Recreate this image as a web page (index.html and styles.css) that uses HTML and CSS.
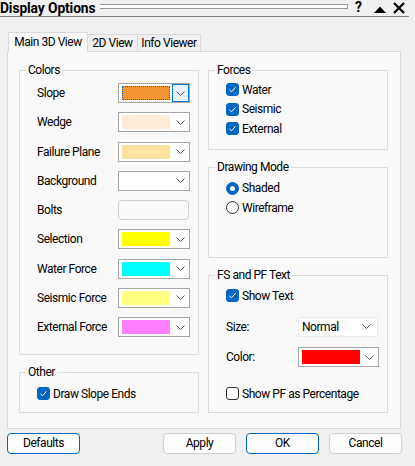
FILE: index.html
```html
<!DOCTYPE html>
<html>
<head>
<meta charset="utf-8">
<link rel="stylesheet" href="styles.css">
</head>
<body>
<div class="titlebar">
  <span class="title">Display Options</span>
  <span class="grip"></span>
  <span class="help">?</span>
  <svg class="tri" width="12" height="7" viewBox="0 0 12 7"><polygon points="0,7 6,0.5 12,7" fill="#000"/></svg>
  <svg class="close" width="12" height="12" viewBox="0 0 12 12"><path d="M1 1 L11 11 M11 1 L1 11" stroke="#000" stroke-width="2.2"/></svg>
</div>
<div class="tabs">
  <div class="tab active">Main 3D View</div>
  <div class="tab">2D View</div>
  <div class="tab">Info Viewer</div>
</div>
<div class="panel">
  <div class="col">
    <div class="group colors">
      <span class="gtitle">Colors</span>
      <div class="crow"><span class="lbl">Slope</span><div class="combo focus"><span class="sw" style="background:#f39530"></span><span class="dd"><svg width="9" height="5" viewBox="0 0 9 5"><polyline points="0.5,0.5 4.5,4.5 8.5,0.5" fill="none" stroke="#555" stroke-width="1"/></svg></span></div></div>
      <div class="crow"><span class="lbl">Wedge</span><div class="combo"><span class="sw" style="background:#feebd7"></span><span class="dd"><svg width="9" height="5" viewBox="0 0 9 5"><polyline points="0.5,0.5 4.5,4.5 8.5,0.5" fill="none" stroke="#555" stroke-width="1"/></svg></span></div></div>
      <div class="crow"><span class="lbl">Failure Plane</span><div class="combo"><span class="sw" style="background:#fee2a2"></span><span class="dd"><svg width="9" height="5" viewBox="0 0 9 5"><polyline points="0.5,0.5 4.5,4.5 8.5,0.5" fill="none" stroke="#555" stroke-width="1"/></svg></span></div></div>
      <div class="crow"><span class="lbl">Background</span><div class="combo"><span class="sw" style="background:#ffffff"></span><span class="dd"><svg width="9" height="5" viewBox="0 0 9 5"><polyline points="0.5,0.5 4.5,4.5 8.5,0.5" fill="none" stroke="#555" stroke-width="1"/></svg></span></div></div>
      <div class="crow"><span class="lbl">Bolts</span><div class="boltbtn"></div></div>
      <div class="crow"><span class="lbl">Selection</span><div class="combo"><span class="sw" style="background:#ffff00"></span><span class="dd"><svg width="9" height="5" viewBox="0 0 9 5"><polyline points="0.5,0.5 4.5,4.5 8.5,0.5" fill="none" stroke="#555" stroke-width="1"/></svg></span></div></div>
      <div class="crow"><span class="lbl">Water Force</span><div class="combo"><span class="sw" style="background:#00ffff"></span><span class="dd"><svg width="9" height="5" viewBox="0 0 9 5"><polyline points="0.5,0.5 4.5,4.5 8.5,0.5" fill="none" stroke="#555" stroke-width="1"/></svg></span></div></div>
      <div class="crow"><span class="lbl">Seismic Force</span><div class="combo"><span class="sw" style="background:#ffff80"></span><span class="dd"><svg width="9" height="5" viewBox="0 0 9 5"><polyline points="0.5,0.5 4.5,4.5 8.5,0.5" fill="none" stroke="#555" stroke-width="1"/></svg></span></div></div>
      <div class="crow"><span class="lbl">External Force</span><div class="combo"><span class="sw" style="background:#ff80ff"></span><span class="dd"><svg width="9" height="5" viewBox="0 0 9 5"><polyline points="0.5,0.5 4.5,4.5 8.5,0.5" fill="none" stroke="#555" stroke-width="1"/></svg></span></div></div>
    </div>
    <div class="group other">
      <span class="gtitle">Other</span>
      <div class="crow2"><span class="cb on"><svg width="13" height="13" viewBox="0 0 13 13"><polyline points="3.5,6.8 5.5,8.8 9.5,4.3" fill="none" stroke="#fff" stroke-width="1"/></svg></span><span>Draw Slope Ends</span></div>
    </div>
  </div>
  <div class="col">
    <div class="group forces">
      <span class="gtitle">Forces</span>
      <div class="crow2"><span class="cb on"><svg width="13" height="13" viewBox="0 0 13 13"><polyline points="3.5,6.8 5.5,8.8 9.5,4.3" fill="none" stroke="#fff" stroke-width="1"/></svg></span><span>Water</span></div>
      <div class="crow2"><span class="cb on"><svg width="13" height="13" viewBox="0 0 13 13"><polyline points="3.5,6.8 5.5,8.8 9.5,4.3" fill="none" stroke="#fff" stroke-width="1"/></svg></span><span>Seismic</span></div>
      <div class="crow2"><span class="cb on"><svg width="13" height="13" viewBox="0 0 13 13"><polyline points="3.5,6.8 5.5,8.8 9.5,4.3" fill="none" stroke="#fff" stroke-width="1"/></svg></span><span>External</span></div>
    </div>
    <div class="group drawing">
      <span class="gtitle">Drawing Mode</span>
      <div class="crow2"><span class="rb on"></span><span>Shaded</span></div>
      <div class="crow2"><span class="rb"></span><span>Wireframe</span></div>
    </div>
    <div class="group fs">
      <span class="gtitle">FS and PF Text</span>
      <div class="crow2"><span class="cb on"><svg width="13" height="13" viewBox="0 0 13 13"><polyline points="3.5,6.8 5.5,8.8 9.5,4.3" fill="none" stroke="#fff" stroke-width="1"/></svg></span><span>Show Text</span></div>
      <div class="frow size"><span class="flbl">Size:</span><div class="flat"><span class="ftext">Normal</span><svg width="9" height="5" viewBox="0 0 9 5"><polyline points="0.5,0.5 4.5,4.5 8.5,0.5" fill="none" stroke="#555" stroke-width="1"/></svg></div></div>
      <div class="frow color"><span class="flbl">Color:</span><div class="combo wide"><span class="sw" style="background:#ff0000"></span><span class="dd"><svg width="9" height="5" viewBox="0 0 9 5"><polyline points="0.5,0.5 4.5,4.5 8.5,0.5" fill="none" stroke="#555" stroke-width="1"/></svg></span></div></div>
      <div class="crow2 pf"><span class="cb"></span><span>Show PF as Percentage</span></div>
    </div>
  </div>
</div>
<div class="buttons">
  <div class="btn def">Defaults</div>
  <div class="btn apply">Apply</div>
  <div class="btn def">OK</div>
  <div class="btn">Cancel</div>
</div>
</body>
</html>
```
FILE: styles.css
```css
* { box-sizing: border-box; }
html, body { margin: 0; padding: 0; }
body {
  background: #f0f0f0;
  font-family: Roboto, "Liberation Sans", sans-serif;
  font-size: 12px;
  letter-spacing: -0.45px;
  color: #000;
  width: 415px;
  height: 466px;
  overflow: hidden;
}
.titlebar {
  display: flex;
  align-items: flex-start;
  width: 409px;
  height: 17px;
  border-bottom: 1px solid #7f7f7f;
}
.title {
  font-weight: 700;
  font-size: 13.8px;
  letter-spacing: -0.1px;
  line-height: 16px;
  width: 100px;
  white-space: nowrap;
}
.grip {
  margin-top: 4px;
  width: 248px;
  height: 5px;
  border: 1px solid #9a9a9a;
  border-left: none;
  background: #fff;
}
.help {
  margin-left: 7px;
  font-weight: 700;
  font-size: 14px;
  line-height: 15px;
  width: 19px;
}
.tri { margin-top: 6px; }
.close { margin-left: 7px; margin-top: 2px; }
.tabs {
  display: flex;
  align-items: flex-end;
  height: 35px;
  margin-bottom: -1px;
  padding-left: 8px;
  position: relative;
  z-index: 1;
}
.tab {
  height: 18px;
  border: 1px solid #d9d9d9;
  background: #f0f0f0;
  margin-left: -1px;
  text-align: center;
  line-height: 16px;
}
.tab.active {
  height: 20px;
  width: 80px;
  margin-left: 0;
  border-bottom: none;
  background: #f9f9f9;
  line-height: 19px;
  position: relative;
  z-index: 2;
}
.tab:nth-child(2) { width: 51px; }
.tab:nth-child(3) { width: 64px; }
.panel {
  margin-left: 7px;
  width: 394px;
  height: 378px;
  border: 1px solid #d9d9d9;
  background: #f9f9f9;
  display: flex;
  gap: 9px;
  padding: 18px 0 0 11px;
}
.col { display: flex; flex-direction: column; gap: 17px; }
.group {
  position: relative;
  border: 1px solid #dcdcdc;
}
.gtitle {
  position: absolute;
  top: -8px;
  left: 6px;
  padding: 0 2px;
  line-height: 15px;
  background: #f9f9f9;
}
.colors { width: 180px; height: 285px; padding: 7.4px 0 0 17px; }
.other { width: 180px; height: 41px; padding: 11px 0 0 17px; }
.forces { width: 180px; height: 80px; padding: 9px 0 0 17px; }
.drawing { width: 180px; height: 91px; padding: 10.5px 0 0 17px; }
.fs { width: 180px; height: 138px; padding: 10px 0 0 17px; }
.crow {
  display: flex;
  align-items: center;
  height: 29.25px;
}
.lbl { width: 81px; }
.combo {
  display: flex;
  width: 72px;
  height: 20px;
  border: 1px solid #a6a6a6;
  background: #fff;
  padding: 2px 1px 3px 3px;
}
.combo .sw { width: 50px; height: 14px; }
.combo .dd {
  margin-left: 2px;
  width: 16px;
  margin-top: -2px;
  margin-bottom: -3px;
  display: flex;
  align-items: center;
  justify-content: center;
}
.combo.focus .sw { outline: 1px dotted #1a5fb4; outline-offset: -1px; }
.combo.focus .dd { border: 1px solid #0078d4; background: #e5f1fb; margin-right: -1px; width: 17px; }
.combo.wide { width: 81px; }
.combo.wide .sw { width: 60px; }
.boltbtn {
  width: 71px;
  height: 20px;
  border: 1px solid #cfcfcf;
  border-radius: 4px;
  background: #fafafa;
}
.crow2 {
  display: flex;
  align-items: center;
  height: 19.5px;
  gap: 3px;
}
.cb {
  width: 13px;
  height: 13px;
  border-radius: 3px;
  border: 1px solid #333;
  background: #fff;
  display: block;
}
.cb.on { background: #0067c0; border-color: #0067c0; }
.cb svg { display: block; margin: -1px; }
.rb {
  width: 13px;
  height: 13px;
  border-radius: 50%;
  border: 1px solid #333;
  background: #fff;
  display: flex;
  align-items: center;
  justify-content: center;
}
.rb.on { background: #0067c0; border-color: #0067c0; }
.rb.on::after { content: ""; width: 5px; height: 5px; border-radius: 50%; background: #fff; }
.frow {
  display: flex;
  align-items: center;
  height: 22px;
}
.frow.size { margin-top: 10px; }
.frow.color { margin-top: 8.5px; }
.crow2.pf { margin-top: 16px; }
.flbl { width: 72px; }
.flat {
  width: 80px;
  height: 20px;
  background: #fff;
  border: 1px solid #ececec;
  display: flex;
  align-items: center;
  justify-content: space-between;
  padding: 0 6px 0 3px;
}
.buttons {
  display: flex;
  margin-top: 4px;
  padding-left: 7px;
  gap: 10px;
}
.btn {
  width: 73px;
  height: 21px;
  border: 1px solid #d0d0d0;
  border-radius: 4px;
  background: #fdfdfd;
  text-align: center;
  line-height: 19px;
}
.btn.def { border-color: #0067c0; }
.btn.apply { margin-left: 73px; }
```
